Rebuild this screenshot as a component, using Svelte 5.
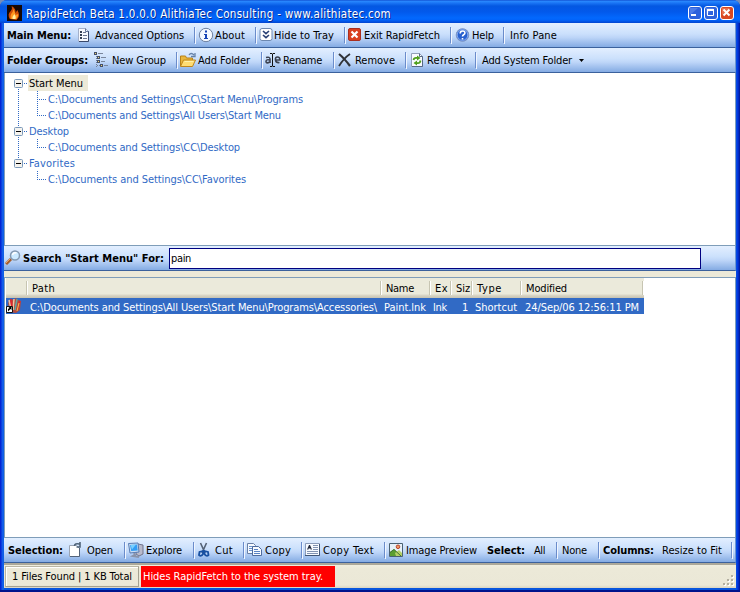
<script>
  const label = (text, gap, width) => ({ kind: 'label', text, gap, width });
  const text = (text, gap, width) => ({ kind: 'text', text, gap, width });
  const icon = (name, gap) => ({ kind: 'icon', name, gap, width: 16 });
  const sep = (gap) => ({ kind: 'sep', gap, width: 2 });

  const mainMenu = [
    label('Main Menu:', 2, 64),
    icon('options', 6), text('Advanced Options', 2, 89), sep(10),
    icon('about', 2), text('About', 1, 30), sep(10),
    icon('tray', 1), text('Hide to Tray', 0, 60), sep(10),
    icon('exit', 1), text('Exit RapidFetch', 1, 76), sep(10),
    icon('help', 3), text('Help', 1, 22), sep(9),
    text('Info Pane', 5, 47)
  ];
  const folderGroups = [
    label('Folder Groups:', 2, 81),
    icon('tree', 6), text('New Group', 2, 54), sep(10),
    icon('folder', 2), text('Add Folder', 2, 52), sep(11),
    icon('rename', 2), text('Rename', 2, 39), sep(11),
    icon('remove', 2), text('Remove', 2, 40), sep(10),
    icon('refresh', 3), text('Refresh', 1, 39), sep(9),
    text('Add System Folder', 5, 90), { kind: 'caret', gap: 7, width: 5 }
  ];
  const selection = [
    label('Selection:', 3, 55),
    icon('open', 5), text('Open', 3, 26), sep(11),
    icon('explore', 2), text('Explore', 2, 36), sep(11),
    icon('cut', 2), text('Cut', 2, 18), sep(10),
    icon('copy', 2), text('Copy', 2, 26), sep(10),
    icon('copytext', 2), text('Copy Text', 2, 51), sep(10),
    icon('image', 2), text('Image Preview', 2, 71),
    label('Select:', 10, 38), text('All', 9, 11), sep(11),
    text('None', 4, 25), sep(11),
    label('Columns:', 3, 51), text('Resize to Fit', 8, 60), sep(9)
  ];
  const groups = [
    { name: 'Start Menu', width: 54, selected: true, paths: [
      ['C:\\Documents and Settings\\CC\\Start Menu\\Programs', 255],
      ['C:\\Documents and Settings\\All Users\\Start Menu', 233]
    ] },
    { name: 'Desktop', width: 40, paths: [['C:\\Documents and Settings\\CC\\Desktop', 192]] },
    { name: 'Favorites', width: 46, paths: [['C:\\Documents and Settings\\CC\\Favorites', 198]] }
  ];
  // column width, heading, heading width
  const columns = [
    [21, '', 0], [354, 'Path', 23], [49, 'Name', 28], [21, 'Ex', 13],
    [21, 'Siz', 14], [49, 'Type', 25], [122, 'Modified', 41]
  ];

  // Spreads a caption over its measured width through letter spacing.
  function fit(node, width) {
    const natural = node.getBoundingClientRect().width;
    node.style.letterSpacing = `${(width - natural) / node.textContent.length}px`;
    node.style.width = `${width}px`;
  }
</script>

{#snippet glyph(name)}
  <svg class="icon" width="16" height="16" viewBox="0 0 16 16" fill="none">
    {#if name === 'options'}
      <path d="M1.500 1.500h7l3 3v10h-10z" fill="#f6f8fd" stroke="#a3b0ca" />
      <path d="M11.500 4v10.500H2" stroke="#39486a" />
      <path d="M8.500 1.500v3h3" stroke="#66779d" />
      <path d="M3 4h2v2H3zM3 7h2v2H3zM3 10h2v2H3z" fill="#333d52" />
      <path d="M6 5.500h3M6 8.500h4M6 11.500h4" stroke="#6b7691" />
    {:else if name === 'about'}
      <circle cx="8" cy="8" r="6.700" fill="#f5f9ff" stroke="#6c7f9f" />
      <path d="M7 3.500h2v2H7zM6 7h3v4h1v1H6v-1h1V8H6z" fill="#1744b5" />
    {:else if name === 'tray'}
      <rect x="2" y="1.500" width="12" height="12" rx="2" fill="#fff" stroke="#6d88b0" />
      <path d="M5 4l3 2.700L11 4M5 8l3 2.700L11 8" stroke="#283f73" stroke-width="1.600" />
    {:else if name === 'exit'}
      <rect x="1.500" y="1.500" width="12" height="12" rx="1.500" fill="#d9401f" stroke="#a92f20" />
      <path d="M4.500 4.500l6 6M10.500 4.500l-6 6" stroke="#fff" stroke-width="2.200" />
    {:else if name === 'help'}
      <circle cx="7.500" cy="8" r="6.300" fill="#2860cf" stroke="#8097c4" />
      <circle cx="7.500" cy="8" r="5.300" stroke="#a9c8ff" stroke-width=".7" />
      <path d="M5.200 6.500q0-2.500 2.400-2.500t2.300 2q0 1-1.200 1.700T7.500 9.500M7.500 11v1.500" stroke="#fff" stroke-width="1.600" />
    {:else if name === 'tree'}
      <path d="M2.500 4v11M3 8.500h1M3 13.500h3" stroke="#738097" stroke-dasharray="1 1" />
      <path d="M0 0h3v3H0zM3 4h3v3H3zM3 8h3v3H3zM6 12h3v3H6z" fill="#46516a" />
      <path d="M1 1h1v1H1zM4 5h1v1H4zM4 9h1v1H4zM7 13h1v1H7z" fill="#f0d46b" />
      <path d="M4 1.500h5M7 5.500h5M7 9.500h4M10 13.500h4" stroke="#7a879d" />
    {:else if name === 'folder'}
      <path d="M.5 14V4h5l1 2h6v3" fill="#e9b73d" stroke="#b98118" />
      <path d="M.5 14.500l3-6.500h12l-3 6.500z" fill="#ffdc72" stroke="#bf861c" />
      <path d="M4.500 9.500h9" stroke="#fff1a7" />
      <path d="M9 3q2-3 5 0M15 1v3.500h-4" stroke="#6582a9" stroke-width="1.300" />
    {:else if name === 'rename'}
      <path d="M1 5.500q4-1 4 1.500v4M5 8Q1 7 1 9.500t4 .5M10.500 8H15q0-3-2.500-3t-2 3 4 2.500" stroke="#3c4250" stroke-width="1.600" />
      <path d="M5 1.500h2l.500 1 .5-1h2M7.500 2v12M5 14.500h2l.500-1 .5 1h2" stroke="#111" />
    {:else if name === 'remove'}
      <path d="M2 2q5 4 11 12" stroke="#303338" stroke-width="2.200" />
      <path d="M13 2Q7 6 2 14" stroke="#303338" stroke-width="1.800" />
    {:else if name === 'refresh'}
      <path d="M1.500 1.500h8l3 3v10h-11z" fill="#f9fbff" stroke="#92a0b9" />
      <path d="M12.500 4.500v10H2M9.500 1.500v3h3" stroke="#576987" />
      <path d="M3.500 8Q4 5.500 7 6M10.500 8.500Q10 11.500 7 11" stroke="#50a01c" stroke-width="1.800" />
      <path d="M7 3.500L10.500 6 7 8.500zM7 8.500L3.500 11 7 13.500z" fill="#50a01c" />
    {:else if name === 'open'}
      <path d="M1.500 3.500h7l3 3v8h-10z" fill="#fff" stroke="#9aa4b4" />
      <path d="M11.500 6v8.500H2" stroke="#53637a" />
      <path d="M6.500 4q0-3 5-2M12 0v5H8.500" stroke="#4f6378" stroke-width="1.600" />
    {:else if name === 'explore'}
      <path d="M10 2l5 1v9l-4 2-3-2z" fill="#b8bacc" stroke="#72758c" />
      <path d="M.5 1.500L10 1l1 9-9 1z" fill="#c9dcf2" stroke="#577bb2" />
      <path d="M2 3l7-.5.700 6L3.200 9z" fill="#329df5" />
      <path d="M2.500 3L8 2.500l-4 5z" fill="#78d0ff" />
      <path d="M6 11l1 2-2 1 6 1" stroke="#8993aa" stroke-width="2" />
    {:else if name === 'cut'}
      <path d="M3.500 1l4.500 10M9.500 1L5 11" stroke="#556275" stroke-width="1.600" />
      <path d="M6 9l-3.500 1L2 13q2 2 4-1zM7.500 9l3.500 1 .5 3q-2 2-4-1z" stroke="#1850a1" stroke-width="1.800" />
    {:else if name === 'copy'}
      <path d="M.5 1.500h6l2 2v8h-8z" fill="#f6faff" stroke="#697fa5" />
      <path d="M2 4.500h4M2 6.500h4M2 8.500h4" stroke="#6b93ce" />
      <path d="M5.500 4.500h6l3 3v6h-9z" fill="#f8fbff" stroke="#4e6b9e" />
      <path d="M7 7.500h4M7 9.500h6M7 11.500h6" stroke="#5a83c4" />
    {:else if name === 'copytext'}
      <path d="M.5 1.500h14v12H.5z" fill="#f8fbff" stroke="#8a9bb9" />
      <path d="M14.500 2v11.500H0" stroke="#405575" />
      <path d="M2 7.500l2-4.500h1l2 4.500H5.500v-1h-2v1z" fill="#20283c" />
      <path d="M8 3.500h5M8 5.500h5M8 7.500h5M2 9.500h11M2 11.500h11" stroke="#8293b2" />
    {:else if name === 'image'}
      <path d="M1.500 1.500h13v13h-13z" fill="#e6f1fa" stroke="#496173" />
      <path d="M2 14V10l4-3 7 7z" fill="#5b9e32" />
      <path d="M7 11l4-3 3 3v3H8z" fill="#b5cf65" />
      <circle cx="10" cy="4.800" r="1.800" fill="#f09a62" stroke="#b9452f" />
      <path d="M2 10.500l4-3 7 6.500" stroke="#427433" />
    {/if}
  </svg>
{/snippet}

{#snippet bar(items)}
  {#each items as it}
    <div class="part" style:margin-left="{it.gap}px" style:width="{it.width}px">
      {#if it.kind === 'icon'}{@render glyph(it.name)}
      {:else if it.kind === 'sep'}<i class="sep"></i>
      {:else if it.kind === 'caret'}<svg width="5" height="3"><path d="M0 0h5L2.500 3z" fill="#000" /></svg>
      {:else}<span class={it.kind} use:fit={it.width}>{it.text}</span>{/if}
    </div>
  {/each}
{/snippet}

<div class="window">
  <header class="title">
    <svg class="flame" width="15" height="16" viewBox="0 0 16 16" preserveAspectRatio="none">
      <rect width="16" height="16" fill="#160805" />
      <path d="M3 14Q0 9 4 6q2-2 1-5 5 3 4 7l2-3q4 6-1 10z" fill="#ce4d08" />
      <path d="M4 14q-1-4 2-7l1-3q2 4 2 6l3-1q0 3-2 5z" fill="#ff9820" />
      <path d="M6 14q-1-2 2-5 2 3 1 5z" fill="#fff1a0" />
    </svg>
    <span class="caption" use:fit={365}>RapidFetch Beta 1.0.0.0 AlithiaTec Consulting - www.alithiatec.com</span>
    <div class="controls">
      <svg width="14" height="14" viewBox="0 0 14 14"><rect x=".5" y=".5" width="13" height="13" rx="2.500" fill="#2e62dc" stroke="#fff" /><path d="M2 2h8L2 9z" fill="#648ff0" opacity=".6" /><path d="M3 8h5v2H3z" fill="#fff" /></svg>
      <svg width="14" height="14" viewBox="0 0 14 14"><rect x=".5" y=".5" width="13" height="13" rx="2.500" fill="#2e62dc" stroke="#fff" /><path d="M2 2h8L2 9z" fill="#648ff0" opacity=".6" /><path d="M3.500 4v5.500h6V4" fill="none" stroke="#fff" /><path d="M3 3h7v2H3z" fill="#fff" /></svg>
      <svg width="14" height="14" viewBox="0 0 14 14"><rect x=".5" y=".5" width="13" height="13" rx="2.500" fill="#d94822" stroke="#fff" /><path d="M2 2h8L2 9z" fill="#f08b6b" opacity=".6" /><path d="M3.500 3.500l6 6M9.500 3.500l-6 6" stroke="#fff" stroke-width="2" /></svg>
    </div>
  </header>

  <main>
    <nav class="bar">{@render bar(mainMenu)}</nav>
    <nav class="bar">{@render bar(folderGroups)}</nav>

    <section class="tree">
      {#each groups as g, gi}
        <div class="group" class:last={gi === groups.length - 1}>
          <div class="node">
            <svg class="box" width="9" height="9"><rect x=".5" y=".5" width="8" height="8" rx="1" fill="#f5f3ee" stroke="#7b98b9" /><path d="M2 4.500h5" stroke="#000" /></svg>
            <i class="dash"></i>
            <span class="name" class:selected={g.selected}><span use:fit={g.width}>{g.name}</span></span>
          </div>
          {#each g.paths as [path, w]}
            <div class="leaf"><i class="elbow"></i><span class="path" use:fit={w}>{path}</span></div>
          {/each}
        </div>
      {/each}
    </section>

    <section class="bar search">
      <svg class="lens" width="16" height="16" viewBox="0 0 16 16" fill="none">
        <path d="M1 14l5-5" stroke="#a55d2b" stroke-width="3" />
        <path d="M1 13l4-4" stroke="#e6a46c" />
        <circle cx="10" cy="5.500" r="4.500" fill="#cceaff" stroke="#8499b0" stroke-width="1.500" />
        <path d="M7.500 5q1-3 4-2" stroke="#fff" stroke-width="1.500" />
      </svg>
      <span class="label" use:fit={141}>Search "Start Menu" For:</span>
      <div class="field"><span use:fit={20}>pain</span></div>
    </section>

    <section class="list">
      <div class="head">
        {#each columns as [w, name, tw]}
          <div class="col" style:width="{w}px">{#if name}<span use:fit={tw}>{name}</span>{/if}</div>
        {/each}
      </div>
      <div class="row">
        <svg class="paint" width="16" height="16" viewBox="0 0 16 16">
          <path d="M2 5l3-4 2 1 3-2 2 2 3 1-1 9-4 3-6-1z" fill="#b34b3e" />
          <path d="M3 2l2 9M8 1L7 12" stroke="#f3c2a0" stroke-width="1.500" />
          <path d="M5 1l1 9M14 3l-3 9" stroke="#e4232e" stroke-width="1.500" />
          <path d="M11 1L9 12" stroke="#5ba7a4" stroke-width="1.500" />
          <path d="M13 5l-2 8" stroke="#edc44d" />
          <path d="M.5 8.500h6v6h-6z" fill="#fff" stroke="#111" />
          <path d="M2 13.500V11l1.500-1-1-1h3v3l-1-1z" fill="#000" />
        </svg>
        <span class="c-path" use:fit={347}>C:\Documents and Settings\All Users\Start Menu\Programs\Accessories\</span>
        <span class="c-name" use:fit={42}>Paint.lnk</span>
        <span class="c-ext" use:fit={14}>lnk</span>
        <span class="c-size" use:fit={6}>1</span>
        <span class="c-type" use:fit={42}>Shortcut</span>
        <span class="c-date" use:fit={114}>24/Sep/06 12:56:11 PM</span>
      </div>
    </section>

    <nav class="bar bottom">{@render bar(selection)}</nav>

    <footer>
      <div class="panel"><span use:fit={120}>1 Files Found | 1 KB Total</span></div>
      <div class="hint"><span use:fit={180}>Hides RapidFetch to the system tray.</span></div>
      <svg class="grip" width="12" height="12">
        <path d="M9 1h2v2H9zM5 5h2v2H5zM9 5h2v2H9zM1 9h2v2H1zM5 9h2v2H5zM9 9h2v2H9z" fill="#fff" />
        <path d="M8 0h2v2H8zM4 4h2v2H4zM8 4h2v2H8zM0 8h2v2H0zM4 8h2v2H4zM8 8h2v2H8z" fill="#b3afa0" />
      </svg>
    </footer>
  </main>
</div>

<style>
  :global(body) { background: #768eb8; }
  .window {
    box-sizing: border-box; width: 740px; height: 592px; overflow: hidden;
    display: flex; flex-direction: column; padding: 0 4px 4px;
    border-radius: 7px 7px 0 0;
    background: linear-gradient(90deg, #0019cf 0, #0831d9 1px, #166aee 3px, #0855dd 4px, #0855dd 736px, #0540e8 737px, #0124b8 739px, #00138c);
    box-shadow: inset 0 -2px #00138c;
    font: 11px/16px "DejaVu Sans Condensed", "DejaVu Sans", sans-serif;
    font-stretch: condensed; color: #000;
  }
  span { display: inline-block; white-space: pre; flex: none; }
  svg { display: block; flex: none; }
  .title {
    height: 23px; margin: 0 -4px; padding: 3px 6px 0 7px; box-sizing: border-box;
    display: flex; align-items: center; flex: none;
    background: linear-gradient(#0a3fc5 0, #2b8bff 1px, #1a75f5 3px, #0458e2 6px, #0259ec 12px, #0268fe 18px, #0163fa 20px, #0144cf);
  }
  .caption { margin-left: 4px; padding-top: 1px; font-size: 11.5px; color: #fff; text-shadow: 1px 1px #0a2b8f; }
  .controls { margin-left: auto; display: flex; gap: 2px; }
  main { display: flex; flex-direction: column; flex: 1; width: 732px; background: #ece9d8; }
  .bar {
    height: 25px; box-sizing: border-box; display: flex; align-items: center; flex: none;
    padding-left: 1px; border-bottom: 1px solid #3b619c;
    background: linear-gradient(#e3efff 0, #cbe0fc 45%, #bdd5f8 60%, #84abe3);
    border-right: 1px solid #6f96d0;
  }
  .part { flex: none; height: 16px; display: flex; align-items: center; }
  .part span, .path, .label { padding-top: 2px; }
  .label { font-weight: bold; }
  .sep { width: 1px; height: 16px; background: #6a8ccb; box-shadow: 1px 1px #f1f6ff; }
  .tree {
    height: 172px; box-sizing: border-box; flex: none; padding: 2px 0 0 9px;
    background: #fff; border-left: 1px solid #7f9db9; border-right: 1px solid #7f9db9; color: #316ac5;
  }
  .node, .leaf { height: 16px; display: flex; align-items: center; }
  .group:not(.last) { background: repeating-linear-gradient(#316ac5 0 1px, transparent 1px 2px) 4px 8px / 1px 100% no-repeat; }
  .group + .group .node { background: repeating-linear-gradient(#316ac5 0 1px, transparent 1px 2px) 4px 0 / 1px 8px no-repeat; }
  .dash { width: 4px; height: 1px; margin-left: 1px; background: repeating-linear-gradient(90deg, #316ac5 0 1px, transparent 1px 2px); }
  .name { height: 16px; line-height: 18px; padding: 0 5px 0 1px; }
  .selected { background: #ece9d8; color: #000; }
  .elbow {
    width: 9px; height: 16px; margin: 0 2px 0 23px;
    background:
      repeating-linear-gradient(#316ac5 0 1px, transparent 1px 2px) 0 0 / 1px 9px no-repeat,
      repeating-linear-gradient(90deg, #316ac5 0 1px, transparent 1px 2px) 0 8px / 9px 1px no-repeat;
  }
  .leaf:not(:last-child) .elbow {
    background:
      repeating-linear-gradient(#316ac5 0 1px, transparent 1px 2px) 0 0 / 1px 16px no-repeat,
      repeating-linear-gradient(90deg, #316ac5 0 1px, transparent 1px 2px) 0 8px / 9px 1px no-repeat;
  }
  .search { height: 26px; border-top: 1px solid #7f9db9; }
  .lens { margin-right: 2px; }
  .field {
    margin-left: 5px; width: 532px; height: 21px; box-sizing: border-box;
    border: 1px solid #000080; background: #fff; padding: 2px 0 0 1px;
  }
  .list {
    margin-top: 6px; height: 260px; box-sizing: border-box; flex: none;
    border: 1px solid #7f9db9; border-bottom: 0; background: #fff;
  }
  .head {
    width: 638px; height: 20px; box-sizing: border-box; display: flex; align-items: center; margin-left: 1px;
    background: linear-gradient(#ebeadb 16px, #dbd8c8 17px, #c6c2b1 20px);
  }
  .col { flex: none; height: 14px; line-height: 15px; box-sizing: border-box; padding-left: 5px; border-right: 1px solid #c7c5b2; box-shadow: 1px 0 #fff; }
  .row { width: 638px; height: 16px; margin-left: 1px; display: flex; align-items: center; background: #316ac5; color: #fff; }
  .row span { padding-top: 3px; }
  .c-path { margin-left: 8px; }
  .c-name { margin-left: 7px; }
  .c-ext { margin-left: 7px; }
  .c-size { margin-left: 15px; }
  .c-type { margin-left: 7px; }
  .c-date { margin-left: 8px; }
  .bottom { height: 26px; border-top: 1px solid #7f9db9; }
  footer {
    flex: 1; display: flex; box-sizing: border-box; padding: 1px 0 0 1px;
    border-top: 2px solid #aca899;
    background: linear-gradient(#f0eedf, #ece9d8 4px, #ebe8d7 20px, #d9d5c3);
  }
  .panel { width: 134px; height: 21px; box-sizing: border-box; border: 1px solid; border-color: #b9b5a4 #a5a190 #a5a190 #b9b5a4; box-shadow: inset 1px 1px #fff; padding: 2px 0 0 6px; }
  .hint { width: 194px; height: 21px; margin-left: 2px; background: #f00; color: #fff; padding-left: 2px; box-sizing: border-box; line-height: 22px; }
  .grip { margin: 9px 1px 0 auto; }
</style>
